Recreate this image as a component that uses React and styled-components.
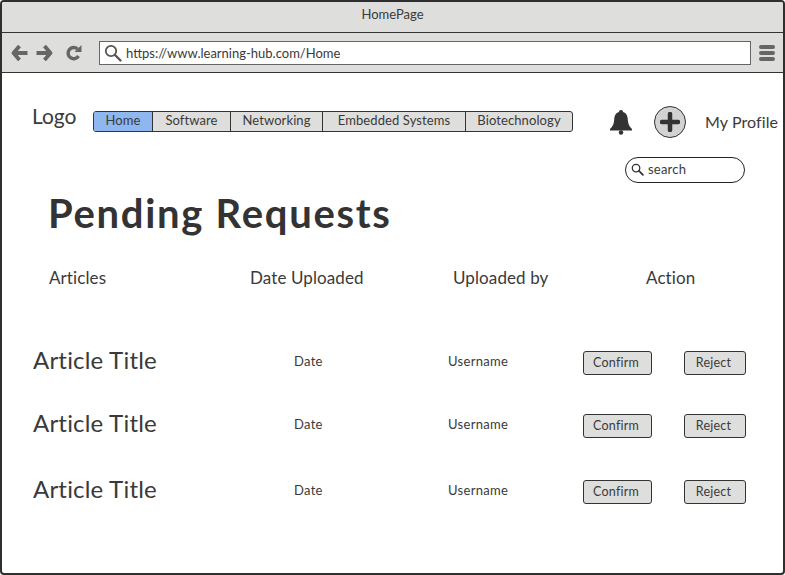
import React from 'react';
import styled, { createGlobalStyle } from 'styled-components';

const GlobalStyle = createGlobalStyle`
  html, body {
    margin: 0;
    padding: 0;
    background: #fff;
  }
  * {
    box-sizing: border-box;
  }
`;

const Window = styled.div`
  width: 785px;
  height: 575px;
  border: 2px solid #2f2f2f;
  border-radius: 4px;
  overflow: hidden;
  background: #fff;
  color: #3a3a3a;
  font-family: "Lato", "Liberation Sans", sans-serif;
`;

const TitleBar = styled.div`
  height: 31px;
  background: #dededc;
  border-bottom: 1px solid #333;
  display: flex;
  justify-content: center;
  padding-top: 4px;
  font-size: 13px;
  line-height: 16px;
`;

const Toolbar = styled.div`
  height: 40px;
  background: #dededc;
  border-bottom: 1px solid #333;
  display: flex;
  align-items: center;
  padding: 0 8px 0 9px;
`;

const NavIcons = styled.div`
  display: flex;
  align-items: center;
  gap: 8px;
  width: 88px;
`;

const ReloadSlot = styled.div`
  display: flex;
  margin-left: 4px;
`;

const UrlBar = styled.div`
  width: 652px;
  height: 24px;
  background: #fff;
  border: 1px solid #666;
  display: flex;
  align-items: center;
  gap: 4px;
  padding-left: 4px;
  font-size: 13px;
`;

const MenuIcon = styled.div`
  margin-left: 8px;
  width: 16px;
  display: flex;
  flex-direction: column;
  gap: 2px;
`;

const MenuLine = styled.span`
  height: 4px;
  border-radius: 2px;
  background: #666;
`;

const Header = styled.div`
  display: flex;
  align-items: flex-start;
  padding: 30px 0 0 30px;
`;

const Logo = styled.div`
  width: 61px;
  font-size: 21px;
  line-height: 26px;
`;

const Tabs = styled.div`
  display: flex;
  height: 21px;
  margin-top: 8px;
  border: 1px solid #333;
  border-radius: 3px;
  overflow: hidden;
  background: #dededc;
`;

const Tab = styled.div`
  width: ${p => p.$width}px;
  background: ${p => (p.$active ? '#8db7ee' : 'transparent')};
  border-right: ${p => (p.$last ? 'none' : '1px solid #333')};
  text-align: center;
  font-size: 13px;
  line-height: 17px;
  letter-spacing: 0.1px;
  white-space: nowrap;
`;

const BellSlot = styled.div`
  margin: 6px 0 0 36px;
  width: 24px;
  height: 26px;
`;

const PlusButton = styled.div`
  margin: 3px 0 0 21px;
  width: 32px;
  height: 32px;
  border-radius: 50%;
  border: 1px solid #333;
  background: #d2d2d2;
  display: flex;
  align-items: center;
  justify-content: center;
`;

const Profile = styled.div`
  margin: 8px 0 0 19px;
  font-size: 16px;
  line-height: 22px;
  letter-spacing: 0.1px;
  white-space: nowrap;
`;

const SearchRow = styled.div`
  display: flex;
  justify-content: flex-end;
  padding-right: 38px;
  margin-top: 19px;
`;

const SearchBox = styled.div`
  width: 120px;
  height: 26px;
  border: 1.5px solid #222;
  border-radius: 13px;
  background: #fff;
  display: flex;
  align-items: center;
  gap: 4px;
  padding: 0 0 2px 5px;
  font-size: 13px;
  letter-spacing: 0.2px;
`;

const PageTitle = styled.h1`
  margin: 6px 0 0 46px;
  font-size: 40px;
  line-height: 48px;
  font-weight: 700;
  letter-spacing: 1.7px;
  color: #333;
`;

const ColumnHeads = styled.div`
  display: grid;
  grid-template-columns: 201px 203px 193px auto;
  margin: 30px 0 0 47px;
  font-size: 17px;
  line-height: 22px;
  letter-spacing: 0.1px;
`;

const Rows = styled.div`
  margin-top: 58px;
  padding-left: 31px;
`;

const Row = styled.div`
  display: grid;
  grid-template-columns: 261px 154px 135px 101px auto;
  align-items: center;
  height: 28px;
  margin-bottom: ${p => p.$gap}px;
`;

const ArticleTitle = styled.div`
  padding-bottom: 2px;
  font-size: 24px;
  line-height: 26px;
  letter-spacing: 0.2px;
  white-space: nowrap;
`;

const Cell = styled.div`
  font-size: 13px;
  line-height: 16px;
  letter-spacing: 0.3px;
`;

const ActionButton = styled.button`
  width: ${p => p.$width}px;
  height: 24px;
  margin-top: 4px;
  padding: 0 3px 2px 0;
  border: 1px solid #333;
  border-radius: 3px;
  background: #dededc;
  color: #3a3a3a;
  font-family: inherit;
  font-size: 12.5px;
  letter-spacing: 0.2px;
`;

const Arrow = ({ flip }) => (
  <svg width="17" height="18" viewBox="0 0 17 18" style={flip ? { transform: 'scaleX(-1)' } : undefined}>
    <path d="M8.500 2 2.500 9l6 7M3 9H16.500" fill="none" stroke="#666" strokeWidth="3.800" strokeLinejoin="round" />
  </svg>
);

const Reload = () => (
  <svg width="17" height="18" viewBox="0 0 17 18">
    <path d="M13.500 12A5.600 5.600 0 1 1 12.500 5" fill="none" stroke="#666" strokeWidth="3.400" />
    <path d="M9.500 8H16.500V1Z" fill="#666" />
  </svg>
);

const Magnifier = ({ size, color, width }) => (
  <svg width={size} height={size} viewBox="0 0 18 18">
    <circle cx="7" cy="7" r="5.200" fill="none" stroke={color} strokeWidth={width} />
    <path d="M11 11l5.500 5.500" stroke={color} strokeWidth={width + 0.6} strokeLinecap="round" />
  </svg>
);

const Bell = () => (
  <svg width="24" height="26" viewBox="0 0 24 26">
    <path
      d="M12 1c1.300 0 2 .8 2 2 3.400 1 4.600 3.800 4.800 7.500.2 4 1.200 7 4.200 9.500v1.500H1V20c3-2.500 4-5.500 4.200-9.500C5.400 6.800 6.600 4 10 3c0-1.200.7-2 2-2Z"
      fill="#333"
    />
    <circle cx="12" cy="23.500" r="2.200" fill="#333" />
  </svg>
);

const Plus = () => (
  <svg width="20" height="20" viewBox="0 0 20 20">
    <path d="M10 2v16M2 10h16" stroke="#333" strokeWidth="4.500" strokeLinecap="round" />
  </svg>
);

const tabs = [
  { label: 'Home', width: 59, active: true },
  { label: 'Software', width: 78 },
  { label: 'Networking', width: 92 },
  { label: 'Embedded Systems', width: 143 },
  { label: 'Biotechnology', width: 106, last: true },
];

const gaps = [35, 38, 0];

export default function App() {
  return (
    <>
      <GlobalStyle />
      <Window>
        <TitleBar>HomePage</TitleBar>
        <Toolbar>
          <NavIcons>
            <Arrow />
            <Arrow flip />
            <ReloadSlot>
              <Reload />
            </ReloadSlot>
          </NavIcons>
          <UrlBar>
            <Magnifier size={18} color="#555" width={1.8} />
            https://www.learning-hub.com/Home
          </UrlBar>
          <MenuIcon>
            <MenuLine />
            <MenuLine />
            <MenuLine />
          </MenuIcon>
        </Toolbar>
        <Header>
          <Logo>Logo</Logo>
          <Tabs>
            {tabs.map(t => (
              <Tab key={t.label} $width={t.width} $active={t.active} $last={t.last}>
                {t.label}
              </Tab>
            ))}
          </Tabs>
          <BellSlot>
            <Bell />
          </BellSlot>
          <PlusButton>
            <Plus />
          </PlusButton>
          <Profile>My Profile</Profile>
        </Header>
        <SearchRow>
          <SearchBox>
            <Magnifier size={13} color="#333" width={1.8} />
            search
          </SearchBox>
        </SearchRow>
        <PageTitle>Pending Requests</PageTitle>
        <ColumnHeads>
          <div>Articles</div>
          <div>Date Uploaded</div>
          <div>Uploaded by</div>
          <div>Action</div>
        </ColumnHeads>
        <Rows>
          {gaps.map((gap, i) => (
            <Row key={i} $gap={gap}>
              <ArticleTitle>Article Title</ArticleTitle>
              <Cell>Date</Cell>
              <Cell>Username</Cell>
              <ActionButton $width={69}>Confirm</ActionButton>
              <ActionButton $width={62}>Reject</ActionButton>
            </Row>
          ))}
        </Rows>
      </Window>
    </>
  );
}
